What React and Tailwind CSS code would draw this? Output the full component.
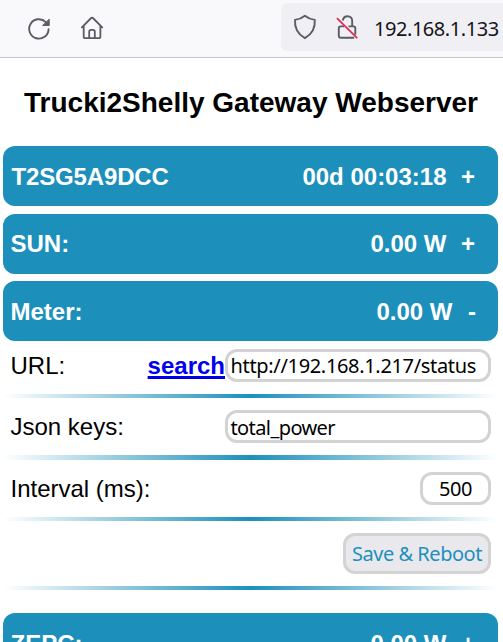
const ARIAL = "font-['Liberation_Sans',Arial,sans-serif]";
const UI = "font-['Noto_Sans','Open_Sans',sans-serif]";

function Bar({ label, value, sign, className = 'pt-px', labelClass = 'pl-[7.5px]', signClass = 'w-[14px]' }) {
  return (
    <div className={`flex h-[60px] shrink-0 items-center rounded-[12px] bg-[#1c90bb] pr-[23px] text-[24px] leading-[28px] font-bold text-white ${className}`}>
      <span className={labelClass}>{label}</span>
      <span className="ml-auto whitespace-nowrap">{value}</span>
      <span className={`ml-[14.5px] ${signClass}`}>{sign}</span>
    </div>
  );
}

function Divider({ className = 'h-1' }) {
  return <div className={`shrink-0 bg-[linear-gradient(to_right,#ffffff,#1c90bb,#ffffff)] ${className}`} />;
}

function Toolbar() {
  return (
    <div className="flex h-[58px] shrink-0 items-start border-b border-[#c5c5ce] bg-[#f9f9fb]">
      <svg className="ml-[26px] mt-[16px] h-[26px] w-[26px] shrink-0" viewBox="0 0 26 26" fill="none" stroke="#5b5b66" strokeWidth="1.9" strokeLinecap="round" strokeLinejoin="round">
        <path d="M22.6 13.2A9.7 9.7 0 1 1 19.8 6.1" />
        <path d="M23.2 3.500v6h-6.200z" fill="#5b5b66" strokeWidth="1" />
      </svg>
      <svg className="ml-[27px] mt-[15px] h-[26px] w-[26px] shrink-0" viewBox="0 0 26 26" fill="none" stroke="#5b5b66" strokeWidth="1.8" strokeLinecap="round" strokeLinejoin="round">
        <path d="M2.9 12.4 12.2 3c.5-.5 1.2-.5 1.7 0l9.3 9.4M4.7 10.8v10.6c0 1 .8 1.8 1.8 1.8h13.1c1 0 1.8-.8 1.8-1.8V10.8" />
        <path d="M10.2 23v-6.4c0-1.1.7-1.8 1.8-1.8h2c1.1 0 1.8.7 1.8 1.8V23" />
      </svg>
      <div className="ml-auto mt-[3px] flex h-[48px] w-[222px] items-start rounded-l-[6px] bg-[#f0f0f4]">
        <svg className="ml-[11px] mt-[11px] h-[26px] w-[26px] shrink-0" viewBox="0 0 26 26" fill="none" stroke="#5b5b66" strokeWidth="1.9" strokeLinejoin="round">
          <path d="M12.9 1.8c2.8 2.3 6.3 3.7 9.9 4.1.5 7.6-2.5 14.2-9.9 18.3C5.5 20.1 2.5 13.5 3 5.9c3.6-.4 7.1-1.8 9.9-4.1z" />
        </svg>
        <svg className="ml-[16px] mt-[11px] h-[26px] w-[26px] shrink-0" viewBox="0 0 26 26" fill="none" stroke="#5b5b66" strokeWidth="1.9" strokeLinecap="butt" strokeLinejoin="round">
          <path d="M8.800 6.500C9.200 4 11 2.200 13.500 2.200c2.700 0 4.700 2 4.700 4.700v5.500M14.500 12.400h4.900c1.100 0 1.900.8 1.900 1.900v6.500M10 12.400H6.700c-1.100 0-1.900.8-1.900 1.900v7.500c0 1.100.8 1.900 1.900 1.900h13.500" />
          <path d="M2.900 4.100 23.200 24.200" stroke="#e22850" strokeWidth="1.7" />
        </svg>
        <span className={`ml-[14px] mt-[12px] whitespace-nowrap text-[20px] leading-[27px] tracking-[-0.45px] text-[#15141a] ${UI}`}>192.168.1.133</span>
      </div>
    </div>
  );
}

function Field({ value, className = '' }) {
  return (
    <div className={`flex h-[33px] items-center rounded-[12px] border-[3px] border-[#d3d3d3] bg-white text-[20px] leading-[27px] whitespace-nowrap text-black ${UI} ${className}`}>
      {value}
    </div>
  );
}

export default function App() {
  return (
    <div className={`flex h-[642px] w-[503px] flex-col overflow-hidden bg-white text-black ${ARIAL}`}>
      <Toolbar />
      <h1 className="mt-[29px] h-[32px] shrink-0 pr-px text-center text-[28px] leading-[32px] font-bold whitespace-nowrap">Trucki2Shelly Gateway Webserver</h1>
      <main className="mt-[27px] ml-[3px] flex w-[495px] flex-col">
        <Bar label="T2SG5A9DCC" value="00d 00:03:18" sign="+" labelClass="pl-[8.5px] tracking-[-0.15px]" />
        <Bar label="SUN:" value="0.00 W" sign="+" className="mt-2 pb-px" />
        <Bar label="Meter:" value="0.00 W" sign="-" signClass="w-[8px] pl-px" className="mt-[7px] pt-px" />
        <div className="flex h-[53px] items-start pt-2 pr-[7px] pl-[7.5px] text-[24px] leading-[33px]">
          <span>URL:</span>
          <a className="ml-auto font-bold text-[#0000ee] underline decoration-[2.5px]">search</a>
          <Field value="http://192.168.1.217/status" className="w-[266px] pl-[2.5px] tracking-[-0.33px]" />
        </div>
        <Divider />
        <div className="flex h-[57px] items-start justify-between pt-3 pr-[7px] pl-[7.5px] text-[24px] leading-[33px]">
          <span>Json keys:</span>
          <Field value="total_power" className="w-[266px] pl-[2.5px] pt-px tracking-[-0.6px]" />
        </div>
        <Divider className="h-[5px]" />
        <div className="flex h-[57px] items-start justify-between pt-3 pr-[7px] pl-[7.5px] text-[24px] leading-[33px]">
          <span>Interval (ms):</span>
          <Field value="500" className="w-[71px] justify-center tracking-[-0.4px]" />
        </div>
        <Divider />
        <div className="flex h-[65px] items-start justify-end pt-3 pr-[7px]">
          <button className={`h-[41px] w-[148px] rounded-[12px] border-[3px] border-[#d3d3d3] bg-[#e9e9ed] text-[20px] leading-[35px] tracking-[-0.48px] whitespace-nowrap text-[#1c90bb] ${UI}`}>Save &amp; Reboot</button>
        </div>
        <Divider />
        <Bar label="ZEPC:" value="0.00 W" sign="+" className="mt-[23px] pt-px" />
      </main>
    </div>
  );
}
